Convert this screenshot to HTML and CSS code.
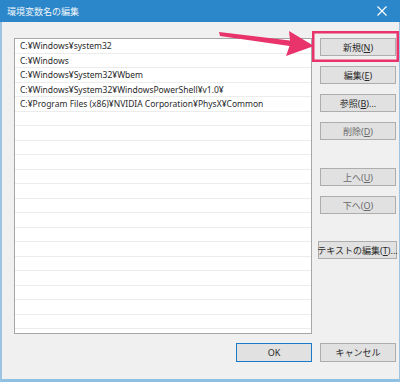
FILE: index.html
```html
<!DOCTYPE html>
<html lang="ja">
<head>
<meta charset="utf-8">
<link rel="stylesheet" href="styles.css">
</head>
<body>
<div class="window">
  <div class="titlebar">
    <span class="title">環境変数名の編集</span>
    <svg class="close" width="10" height="10" viewBox="0 0 10 10"><path d="M0.5 0.5 L9.5 9.5 M9.5 0.5 L0.5 9.5" stroke="#fff" stroke-width="1.2"/></svg>
  </div>
  <div class="content">
    <div class="main">
      <div class="list">
        <div class="row">C:¥Windows¥system32</div>
        <div class="row">C:¥Windows</div>
        <div class="row">C:¥Windows¥System32¥Wbem</div>
        <div class="row">C:¥Windows¥System32¥WindowsPowerShell¥v1.0¥</div>
        <div class="row">C:¥Program Files (x86)¥NVIDIA Corporation¥PhysX¥Common</div>
        <div class="row"></div><div class="row"></div><div class="row"></div><div class="row"></div><div class="row"></div>
        <div class="row"></div><div class="row"></div><div class="row"></div><div class="row"></div><div class="row"></div>
        <div class="row"></div><div class="row"></div><div class="row"></div><div class="row"></div><div class="row"></div>
      </div>
      <div class="side">
        <div class="btn">新規(<u>N</u>)</div>
        <div class="btn">編集(<u>E</u>)</div>
        <div class="btn">参照(<u>B</u>)...</div>
        <div class="btn dim">削除(<u>D</u>)</div>
        <div class="btn dim sep">上へ(<u>U</u>)</div>
        <div class="btn dim">下へ(<u>O</u>)</div>
        <div class="btn wide sep2">テキストの編集(<u>T</u>)...</div>
      </div>
    </div>
    <div class="footer">
      <div class="btn ok">OK</div>
      <div class="btn">キャンセル</div>
    </div>
  </div>
  <svg class="overlay" width="400" height="382" viewBox="0 0 400 382">
    <rect x="313.25" y="32.25" width="84.5" height="28.5" fill="none" stroke="#e8336b" stroke-width="2.5"/>
    <path d="M219 32 L290 40.5 L289 31 L314 46 L286 56 L289.5 46 L220 36 Z" fill="#e8336b"/>
  </svg>
</div>
</body>
</html>
```

FILE: styles.css
```css
html, body {
  margin: 0;
  padding: 0;
  background: #f0f0f0;
}
.window {
  position: relative;
  width: 400px;
  height: 382px;
  box-sizing: border-box;
  border-left: 2px solid #9cc3e0;
  border-right: 1px solid #9cc3e0;
  border-bottom: 3px solid #8fc0e2;
  background: #f0f0f0;
  display: flex;
  flex-direction: column;
  font-family: "Noto Sans", "Noto Sans CJK JP", sans-serif;
  font-size: 9px;
  color: #000;
}
.titlebar {
  height: 22px;
  margin-left: -2px;
  margin-right: -1px;
  background: #2b87c9;
  display: flex;
  align-items: center;
  justify-content: space-between;
  padding: 0 13px 0 7px;
  flex: none;
}
.title {
  color: #eef5fb;
  font-family: "Noto Sans CJK JP", sans-serif;
  font-size: 9px;
}
.close {
  display: block;
}
.content {
  flex: 1;
  display: flex;
  flex-direction: column;
  padding: 16px 3px 0 12px;
}
.main {
  display: flex;
  gap: 8px;
}
.list {
  width: 298px;
  height: 296px;
  box-sizing: border-box;
  border: 1px solid #a6a6a6;
  background: #fff;
  overflow: hidden;
}
.row {
  height: 14.5px;
  box-sizing: border-box;
  border-bottom: 1px solid #ececec;
  padding-left: 5px;
  line-height: 14px;
  font-size: 8.5px;
  white-space: nowrap;
  color: #2a2a2a;
}
.side {
  display: flex;
  flex-direction: column;
  gap: 10px;
  width: 76px;
}
.btn {
  height: 18px;
  box-sizing: border-box;
  border: 1px solid #adadad;
  background: #e1e1e1;
  display: flex;
  align-items: center;
  justify-content: center;
  font-family: "Noto Sans", "Noto Sans CJK JP", sans-serif;
  font-size: 9px;
  color: #2a2a2a;
  white-space: nowrap;
}
.btn u {
  text-decoration-thickness: 1px;
  text-underline-offset: 1px;
}
.btn.dim {
  color: #6a6a6a;
}
.btn.sep {
  margin-top: 18px;
}
.btn.sep2 {
  margin-top: 17px;
}
.btn.wide {
  width: 79px;
  margin-left: -2px;
}
.footer {
  display: flex;
  justify-content: flex-end;
  gap: 8px;
  margin-top: 9px;
}
.footer .btn {
  width: 76px;
  height: 19px;
}
.btn.ok {
  border-color: #1979ca;
}
.overlay {
  position: absolute;
  left: -2px;
  top: 0;
  pointer-events: none;
}
```
